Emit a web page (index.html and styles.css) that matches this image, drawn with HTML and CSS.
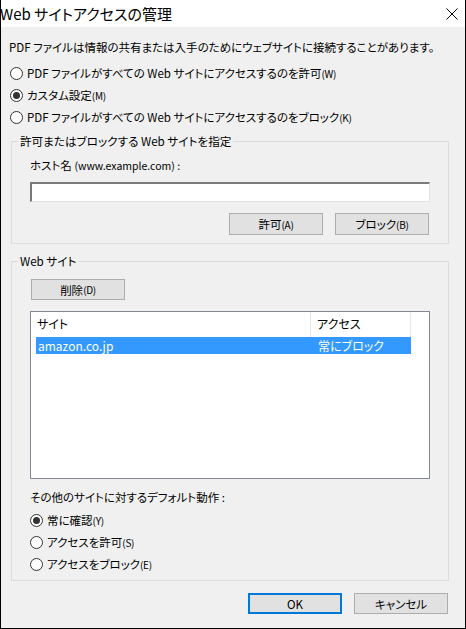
FILE: index.html
```html
<!DOCTYPE html>
<html lang="ja">
<head>
<meta charset="utf-8">
<title>Web サイトアクセスの管理</title>
<link rel="stylesheet" href="styles.css">
</head>
<body>
<div class="window">
  <div class="titlebar">
    <span class="title">Web サイトアクセスの管理</span>
    <svg class="close" width="12" height="12" viewBox="0 0 12 12"><path d="M0.5 0.5 L11.5 11.5 M11.5 0.5 L0.5 11.5" stroke="#000" stroke-width="1" fill="none"/></svg>
  </div>
  <div class="content">
    <div class="intro">PDF ファイルは情報の共有または入手のためにウェブサイトに接続することがあります。</div>
    <div class="radios top-radios">
      <div class="radio"><span class="dot"></span><span>PDF ファイルがすべての Web サイトにアクセスするのを許可<span class="mn">(W)</span></span></div>
      <div class="radio checked"><span class="dot"></span><span>カスタム設定<span class="mn">(M)</span></span></div>
      <div class="radio"><span class="dot"></span><span>PDF ファイルがすべての Web サイトにアクセスするのをブロック<span class="mn">(K)</span></span></div>
    </div>

    <fieldset class="group group-host">
      <legend>許可またはブロックする Web サイトを指定</legend>
      <div class="group-body">
        <div class="label">ホスト名 <span class="small">(www.example.com) :</span></div>
        <div class="input"></div>
        <div class="btn-row">
          <div class="btn">許可<span class="mn">(A)</span></div>
          <div class="btn">ブロック<span class="mn">(B)</span></div>
        </div>
      </div>
    </fieldset>

    <fieldset class="group group-sites">
      <legend>Web サイト</legend>
      <div class="group-body sites-body">
        <div class="btn btn-del">削除<span class="mn">(D)</span></div>
        <div class="listbox">
          <div class="lv-head">
            <div class="lv-h c1">サイト</div>
            <div class="lv-h c2">アクセス</div>
          </div>
          <div class="lv-row selected">
            <div class="lv-c c1">amazon.co.jp</div>
            <div class="lv-c c2">常にブロック</div>
          </div>
        </div>
        <div class="label default-label">その他のサイトに対するデフォルト動作 :</div>
        <div class="radios bottom-radios">
          <div class="radio checked"><span class="dot"></span><span>常に確認<span class="mn">(Y)</span></span></div>
          <div class="radio"><span class="dot"></span><span>アクセスを許可<span class="mn">(S)</span></span></div>
          <div class="radio"><span class="dot"></span><span>アクセスをブロック<span class="mn">(E)</span></span></div>
        </div>
      </div>
    </fieldset>

    <div class="footer">
      <div class="btn btn-ok">OK</div>
      <div class="btn">キャンセル</div>
    </div>
  </div>
</div>
</body>
</html>
```

FILE: styles.css
```css
* { box-sizing: border-box; }
html, body { margin: 0; padding: 0; background: #f0f0f0; }
body {
  font-family: "Noto Sans CJK JP", "Noto Sans", sans-serif;
  font-size: 11.5px;
  color: #000;
  font-feature-settings: "palt";
}
.window {
  width: 466px;
  height: 629px;
  border: 1px solid #000;
  border-top: none;
  background: #f0f0f0;
  overflow: hidden;
}
.titlebar {
  height: 27px;
  background: #fff;
  display: flex;
  align-items: center;
  justify-content: space-between;
  margin-left: -1px;
  padding-right: 7px;
}
.title { font-size: 15px; line-height: 27px; }
.close { display: block; }
.content { padding-top: 9px; }
.intro { padding-left: 8px; line-height: 22px; height: 22px; }
.radios { display: flex; flex-direction: column; }
.top-radios { margin-top: 4px; padding-left: 9px; }
.radio { display: flex; align-items: center; height: 22px; gap: 4px; }
.dot {
  width: 13px; height: 13px;
  border: 1px solid #333;
  border-radius: 50%;
  background: #fff;
  display: flex; align-items: center; justify-content: center;
  flex: none;
}
.radio.checked .dot::after {
  content: "";
  width: 7px; height: 7px;
  border-radius: 50%;
  background: #333;
}
.mn { font-size: 10px; letter-spacing: -0.3px; }
.small { font-size: 10.5px; }
.group {
  margin: 0 16px 0 10px;
  padding: 0;
  border: 1px solid #dcdcdc;
  min-width: 0;
}
.group legend {
  margin-left: 6px;
  padding: 0 2px;
  line-height: 16px;
  font-size: 11.6px;
}
.group-host { margin-top: 5px; }
.group-sites { margin-top: 9px; }
.group-body { padding: 8px 18px 8px 18px; }
.label { line-height: 16px; height: 16px; }
.input {
  margin-top: 9px;
  height: 20px;
  width: 400px;
  background: #fff;
  border-top: 2px solid #7a7a7a;
  border-left: 2px solid #7a7a7a;
  border-right: 1px solid #e3e3e3;
  border-bottom: 1px solid #e3e3e3;
}
.btn-row {
  margin-top: 11px;
  display: flex;
  justify-content: flex-end;
  gap: 12px;
  padding-right: 1px;
}
.btn {
  width: 94px;
  height: 22px;
  background: #e1e1e1;
  border: 1px solid #adadad;
  display: flex;
  align-items: center;
  justify-content: center;
}
.sites-body { padding: 10px 18px 5px 18px; }
.btn-del { height: 21px; margin-left: 1px; }
.listbox {
  margin-top: 11px;
  width: 400px;
  height: 168px;
  background: #fff;
  border: 1px solid #828790;
}
.lv-head {
  display: grid;
  grid-template-columns: 280px 100px;
  height: 25px;
}
.lv-h {
  line-height: 24px;
  border-right: 1px solid #e5e5e5;
  font-size: 12px;
}
.lv-h.c1 { padding-left: 6px; }
.lv-h.c2 { padding-left: 6px; }
.lv-row {
  display: grid;
  grid-template-columns: 275px 100px;
  margin-left: 5px;
  width: 375px;
  height: 17px;
  line-height: 17px;
  font-size: 12px;
}
.lv-row.selected { background: #3399ff; color: #fff; }
.lv-c.c1 { padding-left: 2px; }
.lv-c.c2 { padding-left: 7px; }
.default-label { margin-top: 10px; }
.bottom-radios { margin-top: 4px; }
.footer {
  margin-top: 12px;
  display: flex;
  justify-content: flex-end;
  gap: 12px;
  padding-right: 17px;
}
.footer .btn { height: 21px; }
.btn-ok { border: 2px solid #0078d7; }
```
